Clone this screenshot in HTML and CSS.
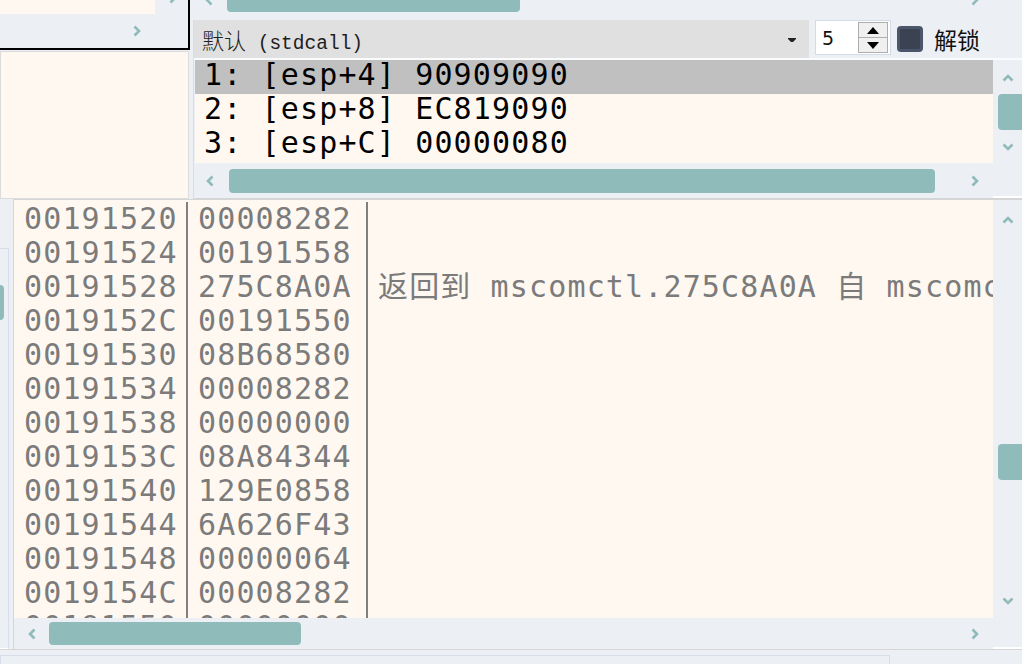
FILE: index.html
```html
<!DOCTYPE html>
<html lang="zh">
<head>
<meta charset="utf-8">
<title>Stack</title>
<link rel="stylesheet" href="styles.css">
</head>
<body>
<div class="app">
  <div class="top">
    <div class="left-col">
      <div class="mini">
        <div class="mini-row">
          <div class="mini-cream"></div>
          <svg class="chev mini-cut" width="8" height="12" viewBox="0 0 8 12"><path d="M1.5 1.5 L6 6 L1.5 10.5"/></svg>
        </div>
        <div class="mini-scroll">
          <svg class="chev" width="8" height="12" viewBox="0 0 8 12"><path d="M1.5 1.5 L6 6 L1.5 10.5"/></svg>
        </div>
      </div>
      <div class="left-panel"></div>
    </div>
    <div class="right-col">
      <div class="top-strip">
        <svg class="chev cut" width="8" height="12" viewBox="0 0 8 12"><path d="M6.5 1.5 L2 6 L6.5 10.5"/></svg>
        <div class="strip-thumb"></div>
        <svg class="chev cut strip-right" width="8" height="12" viewBox="0 0 8 12"><path d="M1.5 1.5 L6 6 L1.5 10.5"/></svg>
      </div>
      <div class="pane">
        <div class="toolbar">
          <div class="combo">
            <span class="combo-text"><span class="cjk">默认</span> (stdcall)</span>
            <svg class="combo-arrow" width="8" height="5" viewBox="0 0 8 5"><path d="M0 0 H8 V1 L5 4 H3 L0 1 Z"/></svg>
          </div>
          <div class="spin">
            <span class="spin-val">5</span>
            <div class="spin-btns">
              <div class="spin-btn"><svg width="12" height="7" viewBox="0 0 12 7"><path d="M6 0 L12 7 H0 Z"/></svg></div>
              <div class="spin-btn"><svg width="12" height="7" viewBox="0 0 12 7"><path d="M0 0 H12 L6 7 Z"/></svg></div>
            </div>
          </div>
          <div class="check"><div class="check-in"></div></div>
          <span class="check-label">解锁</span>
        </div>
        <div class="list-body">
          <div class="list">
            <div class="lrow sel">1: [esp+4] 90909090</div>
            <div class="lrow">2: [esp+8] EC819090</div>
            <div class="lrow">3: [esp+C] 00000080</div>
            <div class="lrow">4: [esp+10] 00000000</div>
          </div>
          <div class="vscroll vs-top">
            <svg class="chev" width="12" height="8" viewBox="0 0 12 8"><path d="M1.5 6.5 L6 2 L10.5 6.5"/></svg>
            <div class="vthumb vthumb-top"></div>
            <svg class="chev" width="12" height="8" viewBox="0 0 12 8"><path d="M1.5 1.5 L6 6 L10.5 1.5"/></svg>
          </div>
        </div>
        <div class="hscroll hs-top">
          <svg class="chev" width="8" height="12" viewBox="0 0 8 12"><path d="M6.5 1.5 L2 6 L6.5 10.5"/></svg>
          <div class="hthumb hthumb-top"></div>
          <svg class="chev hs-right" width="8" height="12" viewBox="0 0 8 12"><path d="M1.5 1.5 L6 6 L1.5 10.5"/></svg>
          <div class="corner"></div>
        </div>
      </div>
    </div>
  </div>
  <div class="sep"></div>
  <div class="bottom">
    <div class="side">
      <div class="side-box"><div class="side-thumb"></div></div>
    </div>
    <div class="stack">
      <div class="stack-body">
        <div class="grid">
          <div class="c1">00191520</div><div class="c2">00008282</div><div class="c3"></div>
          <div class="c1">00191524</div><div class="c2">00191558</div><div class="c3"></div>
          <div class="c1">00191528</div><div class="c2">275C8A0A</div><div class="c3">返回到 mscomctl.275C8A0A 自 mscomctl.275C7F3E</div>
          <div class="c1">0019152C</div><div class="c2">00191550</div><div class="c3"></div>
          <div class="c1">00191530</div><div class="c2">08B68580</div><div class="c3"></div>
          <div class="c1">00191534</div><div class="c2">00008282</div><div class="c3"></div>
          <div class="c1">00191538</div><div class="c2">00000000</div><div class="c3"></div>
          <div class="c1">0019153C</div><div class="c2">08A84344</div><div class="c3"></div>
          <div class="c1">00191540</div><div class="c2">129E0858</div><div class="c3"></div>
          <div class="c1">00191544</div><div class="c2">6A626F43</div><div class="c3"></div>
          <div class="c1">00191548</div><div class="c2">00000064</div><div class="c3"></div>
          <div class="c1">0019154C</div><div class="c2">00008282</div><div class="c3"></div>
          <div class="c1">00191550</div><div class="c2">00000000</div><div class="c3"></div>
        </div>
        <div class="vscroll vs-bot">
          <svg class="chev" width="12" height="8" viewBox="0 0 12 8"><path d="M1.5 6.5 L6 2 L10.5 6.5"/></svg>
          <div class="vthumb vthumb-bot"></div>
          <svg class="chev vs-down" width="12" height="8" viewBox="0 0 12 8"><path d="M1.5 1.5 L6 6 L10.5 1.5"/></svg>
        </div>
      </div>
      <div class="hscroll hs-bot">
        <svg class="chev" width="8" height="12" viewBox="0 0 8 12"><path d="M6.5 1.5 L2 6 L6.5 10.5"/></svg>
        <div class="hthumb hthumb-bot"></div>
        <svg class="chev hs-right" width="8" height="12" viewBox="0 0 8 12"><path d="M1.5 1.5 L6 6 L1.5 10.5"/></svg>
        <div class="corner"></div>
      </div>
    </div>
  </div>
  <div class="footer"><div class="footer-box"></div></div>
</div>
</body>
</html>
```
FILE: styles.css
```css
* { box-sizing: border-box; }
html, body { margin: 0; padding: 0; }
body {
  width: 1022px;
  height: 664px;
  overflow: hidden;
  background: #eceff4;
  font-family: "DejaVu Sans", sans-serif;
}
.app { display: flex; flex-direction: column; height: 664px; }

.chev path { fill: none; stroke: #8fbcbb; stroke-width: 2.6; }
.chev { display: block; flex: none; }

/* ---------- top ---------- */
.top { display: flex; height: 199px; }
.left-col { width: 190px; display: flex; flex-direction: column; flex: none; }
.mini {
  height: 50px;
  border-right: 2px solid #000;
  border-bottom: 2px solid #000;
  overflow: hidden;
}
.mini-row { display: flex; align-items: flex-start; height: 14px; }
.mini-cream { width: 155px; height: 14px; background: #fff8f1; }
.mini-cut { margin-left: 14px; margin-top: -8px; }
.mini-scroll { display: flex; justify-content: flex-end; padding-right: 47px; padding-top: 11px; }
.left-panel {
  margin-top: 1px;
  width: 189px;
  height: 148px;
  background: #fff8f1;
  border: 1px solid #dcdcdc;
}

.right-col { flex: 1; margin-left: 3px; display: flex; flex-direction: column; min-width: 0; }
.top-strip { height: 20px; display: flex; align-items: flex-start; padding-left: 12px; }
.chev.cut { margin-top: -6px; }
.strip-thumb {
  margin-left: 14px;
  width: 293px;
  height: 12px;
  background: #8fbcbb;
  border-radius: 0 0 4px 4px;
}
.strip-right { margin-left: auto; margin-right: 43px; }

.pane {
  flex: 1;
  border-left: 1px solid #d9dee6;
  border-bottom: 1px solid #d4d4d4;
  display: flex;
  flex-direction: column;
}
.toolbar { height: 38px; display: flex; align-items: flex-start; }
.combo {
  width: 615px;
  height: 38px;
  background: #e0e0e0;
  display: flex;
  align-items: center;
  padding-left: 8px;
  padding-right: 13px;
}
.combo-text {
  font-family: "Liberation Mono", monospace;
  font-size: 19.5px;
  color: #1e1e1e;
  white-space: pre;
}
.cjk { font-family: "Noto Sans CJK SC", sans-serif; font-size: 22px; font-weight: 300; }
.combo-arrow { margin-left: auto; margin-top: 2px; }
.combo-arrow path { fill: #222; }

.spin {
  margin-left: 6px;
  width: 76px;
  height: 35px;
  background: #fff;
  border: 1px solid #d3dbe7;
  display: flex;
  align-items: center;
  padding-left: 6px;
}
.spin-val { font-family: "DejaVu Sans", sans-serif; font-size: 19px; color: #111; }
.spin-btns {
  margin-left: auto;
  margin-right: 2px;
  width: 30px;
  height: 31px;
  display: flex;
  flex-direction: column;
  border: 1px solid #aeaeae;
}
.spin-btn {
  flex: 1;
  display: flex;
  align-items: center;
  justify-content: center;
  background: #f0f0f0;
}
.spin-btn + .spin-btn { border-top: 1px solid #aeaeae; }
.spin-btn path { fill: #000; }

.check {
  margin-left: 6px;
  margin-top: 6px;
  width: 26px;
  height: 26px;
  border-radius: 4px;
  background: #4c566a;
  padding: 3px;
}
.check-in { width: 100%; height: 100%; background: #3b4252; border-radius: 1px; }
.check-label {
  margin-left: 11px;
  font-family: "Noto Sans CJK SC", sans-serif;
  font-size: 23px;
  line-height: 38px;
  color: #111;
}

.list-body { height: 105px; border-top: 2px solid #fafbfc; display: flex; }
.list {
  flex: 1;
  margin-left: 1px;
  background: #fff8f1;
  overflow: hidden;
  font-family: "DejaVu Sans Mono", monospace;
  font-size: 30px;
  letter-spacing: 1.14px;
  color: #000;
}
.lrow { height: 34px; line-height: 30px; padding-left: 9px; white-space: pre; }
.lrow.sel { background: #c0c0c0; }

.vscroll { width: 29px; flex: none; display: flex; flex-direction: column; align-items: center; }
.vthumb { width: 24px; margin-left: 5px; background: #8fbcbb; border-radius: 4px 0 0 4px; }
.vs-top { padding-top: 14px; }
.vthumb-top { margin-top: 12px; margin-bottom: 13px; height: 36px; }

.hscroll { display: flex; align-items: center; }
.hs-top { height: 35px; padding-left: 12px; }
.hthumb { background: #8fbcbb; border-radius: 4px; }
.hthumb-top { margin-left: 15px; width: 706px; height: 24px; }
.hs-right { margin-left: auto; margin-right: 14px; }
.corner { width: 29px; height: 100%; border-bottom: 2px solid #fff; align-self: stretch; }

/* ---------- bottom ---------- */
.sep { height: 2px; }
.bottom { display: flex; height: 452px; }
.side { width: 13px; flex: none; padding-top: 49px; }
.side-box {
  width: 9px;
  height: 100%;
  border-top: 1px solid #d8dee9;
  border-right: 1px solid #d8dee9;
  border-bottom: 1px solid #fff;
  padding-top: 36px;
}
.side-thumb { width: 4px; height: 35px; background: #8fbcbb; border-radius: 0 4px 4px 0; }

.stack {
  flex: 1;
  border-left: 1px solid #d6d6d6;
  border-top: 1px solid #d6d6d6;
  display: flex;
  flex-direction: column;
}
.stack-body { height: 418px; display: flex; }
.grid {
  flex: 1;
  background: #fff8f1;
  overflow: hidden;
  display: grid;
  grid-template-columns: 174px 180px 1fr;
  grid-auto-rows: 34px;
  align-content: start;
  padding-top: 2px;
  font-family: "DejaVu Sans Mono", "Noto Sans CJK SC", monospace;
  font-size: 30px;
  letter-spacing: 1.14px;
  line-height: 34px;
  color: #7b7b7b;
  min-width: 0;
}
.grid > div { white-space: pre; }
.c1, .c2 { padding-left: 10px; border-right: 2px solid #7f7f7f; }
.c3 { padding-left: 10px; overflow: hidden; }

.vs-bot { padding-top: 16px; }
.vthumb-bot { margin-top: 220px; height: 36px; }
.vs-down { margin-top: auto; margin-bottom: 13px; }

.hs-bot { height: 31px; padding-left: 14px; }
.hthumb-bot { margin-left: 13px; width: 252px; height: 23px; }

.footer { flex: 1; border-top: 1px solid #d6d6d6; padding-top: 5px; }
.footer-box { width: 890px; height: 10px; border: 1px solid #d8dee9; }
```
